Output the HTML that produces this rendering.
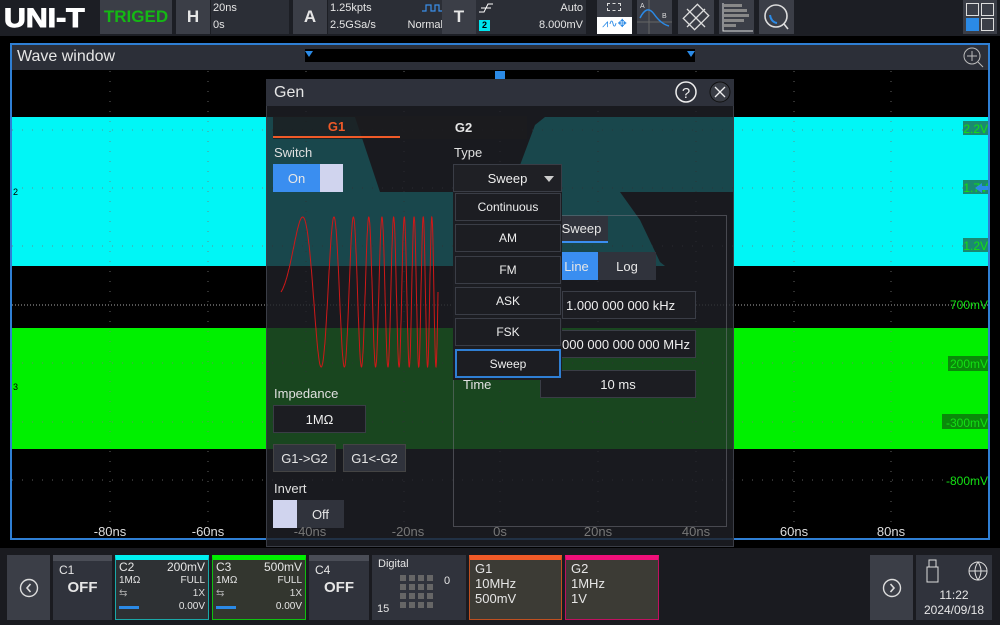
<!DOCTYPE html>
<html><head><meta charset="utf-8"><style>
*{margin:0;padding:0;box-sizing:border-box}
body{width:1000px;height:625px;background:#000;position:relative;overflow:hidden;font-family:"Liberation Sans","DejaVu Sans",sans-serif;color:#e6e6e6}
.a{position:absolute}
.c{display:flex;align-items:center;justify-content:center}
.tb{background:#2b2e36}
.btn{background:#3b3e47}
.f{background:#1c1d22;border:1px solid #3a3d46;font-size:13px;color:#eee}
.lbl{font-size:13px;color:#e0e0e0}
.card{background:#30333c;border-top:6px solid #4a4d56;font-size:12px}
</style></head><body>
<div class="a" style="left:0;top:0;width:1000px;height:36px;background:#1c1e24"></div>
<div class="a" style="left:4px;top:3px;font:900 27px 'Liberation Sans',sans-serif;color:#fff;line-height:30px;transform:scaleX(1.12);transform-origin:left;-webkit-text-stroke:1px #fff">UNI-T</div>
<div class="a c btn" style="left:100px;top:0;width:72px;height:34px;color:#14b814;font-weight:bold;font-size:17px">TRIGED</div>
<div class="a c btn" style="left:176px;top:0;width:34px;height:34px;font-size:17px;font-weight:bold">H</div>
<div class="a tb" style="left:211px;top:0;width:78px;height:34px;font-size:11px;line-height:17px;padding-left:2px">20ns<br>0s</div>
<div class="a c btn" style="left:293px;top:0;width:34px;height:34px;font-size:17px;font-weight:bold">A</div>
<div class="a tb" style="left:328px;top:0;width:118px;height:34px;font-size:11px;line-height:17px;padding-left:2px">1.25kpts<br>2.5GSa/s<span style="position:absolute;right:3px;top:17px">Normal</span>
<svg class="a" style="right:4px;top:3px" width="20" height="10"><path d="M0 8H4V2H9V8H13V2H17V8H20" stroke="#3a8ee8" fill="none" stroke-width="1.2"/></svg></div>
<div class="a c btn" style="left:442px;top:0;width:34px;height:34px;font-size:17px;font-weight:bold">T</div>
<div class="a tb" style="left:476px;top:0;width:110px;height:34px;font-size:11px;line-height:17px">
<svg class="a" style="left:3px;top:3px" width="14" height="10"><path d="M0 9H5L9 1H14M2 5H12" stroke="#fff" fill="none" stroke-width="1"/></svg>
<div class="a c" style="left:3px;top:20px;width:11px;height:11px;background:#00e5ee;color:#000;font-size:9px;font-weight:bold">2</div>
<span style="position:absolute;right:3px;top:0">Auto</span><span style="position:absolute;right:3px;top:17px">8.000mV</span></div>
<div class="a" style="left:597px;top:0;width:35px;height:17px;background:#3b3e47"><div class="a" style="left:10px;top:3px;width:14px;height:8px;border:1px dashed #ddd"></div></div>
<div class="a" style="left:597px;top:17px;width:35px;height:17px;background:#fff;color:#2b8ae6;font-size:11px;text-align:center">⩘∿✥</div>
<div class="a btn" style="left:637px;top:0;width:35px;height:34px"><svg width="35" height="34"><path d="M12 0V34M0 22H35" stroke="#666"/><path d="M3 18Q10 4 17 14T32 26" stroke="#2b8ae6" fill="none" stroke-width="1.5"/><text x="3" y="8" font-size="7" fill="#ddd">A</text><text x="25" y="18" font-size="7" fill="#ddd">B</text></svg></div>
<div class="a btn" style="left:678px;top:0;width:36px;height:34px"><svg width="36" height="34"><g stroke="#ddd" fill="none" stroke-width="1.3"><rect x="10" y="7" width="16" height="20" transform="rotate(45 18 17)"/><path d="M9 9L27 27M27 9L9 27"/></g></svg></div>
<div class="a btn" style="left:719px;top:0;width:35px;height:34px"><svg width="35" height="34"><path d="M4 3V31H34" stroke="#ddd" fill="none"/><g fill="#888"><rect x="5" y="4" width="18" height="3"/><rect x="5" y="9" width="23" height="3"/><rect x="5" y="14" width="25" height="3"/><rect x="5" y="19" width="20" height="3"/><rect x="5" y="24" width="12" height="3"/></g></svg></div>
<div class="a btn" style="left:759px;top:0;width:35px;height:34px"><svg width="35" height="34"><circle cx="17" cy="16" r="11" stroke="#ddd" fill="none" stroke-width="1.6"/><path d="M25 24L29 29" stroke="#ddd" stroke-width="1.6"/><path d="M11 15Q12 22 18 23" stroke="#2b8ae6" fill="none" stroke-width="2"/></svg></div>
<div class="a btn" style="left:963px;top:0;width:34px;height:34px"><div class="a" style="left:3px;top:3px;width:13px;height:13px;border:1px solid #ddd"></div><div class="a" style="left:18px;top:3px;width:13px;height:13px;border:1px solid #ddd"></div><div class="a" style="left:3px;top:18px;width:13px;height:13px;background:#2b8ae6"></div><div class="a" style="left:18px;top:18px;width:13px;height:13px;border:1px solid #ddd"></div></div>

<div class="a" style="left:10px;top:43px;width:980px;height:497px;border:2px solid #2f7fd4"></div>
<div class="a" style="left:12px;top:45px;width:976px;height:25px;background:#2c2f38;font-size:16px;line-height:24px;padding-left:5px">Wave window</div>
<div class="a" style="left:305px;top:49px;width:390px;height:13px;background:#000"></div>
<svg class="a" style="left:305px;top:51px" width="390" height="8"><path d="M0 0H8L4 6Z M382 0H390L386 6Z" fill="#2b8ae6"/></svg>
<svg class="a" style="left:962px;top:46px" width="22" height="22"><circle cx="10" cy="10" r="8" stroke="#bbb" fill="none"/><path d="M10 5V15M5 10H15M16 16L21 21" stroke="#bbb"/></svg>
<svg class="a" style="left:0;top:0" width="1000" height="625">
<path d="M12 117H355L380 192H510L535 125L545 117H988V266H734V192H620L640 220L660 262L665 266H12Z" fill="#00f6f6"/>
<rect x="12" y="328" width="976" height="121" fill="#00f000"/>
<g stroke="#777" stroke-dasharray="1 9" stroke-width="1" opacity=".8">
<path d="M110 71V538M208 71V538M306 71V538M404 71V538M500 71V538M598 71V538M696 71V538M794 71V538M891 71V538"/>
<path d="M12 130H988M12 188H988M12 246H988M12 363H988M12 422H988M12 480H988"/>
</g>
<path d="M12 305H988" stroke="#aaa" stroke-dasharray="1 2"/>
<rect x="495" y="71" width="10" height="8" fill="#2b8ae6"/>
<path d="M12 185H20L23 192L20 199H12Z" fill="#00f6f6"/><text x="13" y="195" font-size="9" fill="#000">2</text>
<path d="M12 379H20L23 386L20 393H12Z" fill="#00f000"/><text x="13" y="390" font-size="9" fill="#000">3</text>
<g font-size="12" fill="#13e013" text-anchor="end" font-family="Liberation Sans">
<rect x="963" y="121" width="25" height="14" fill="#1a8a70"/><text x="988" y="133">2.2V</text>
<rect x="963" y="180" width="25" height="14" fill="#1a8a70"/><text x="988" y="192">1.7V</text>
<rect x="963" y="238" width="25" height="14" fill="#1a8a70"/><text x="988" y="250">1.2V</text>
<text x="988" y="309">700mV</text>
<rect x="948" y="356" width="40" height="15" fill="#0a8a0a"/><text x="988" y="368">200mV</text>
<rect x="942" y="414" width="46" height="15" fill="#0a8a0a"/><text x="988" y="427">-300mV</text>
<text x="988" y="485">-800mV</text></g>
<path d="M975 188L982 183V186H988V190H982V193Z" fill="#2b8ae6"/>
<g font-size="13" fill="#ddd" text-anchor="middle" font-family="Liberation Sans">
<text x="110" y="536">-80ns</text><text x="208" y="536">-60ns</text><text x="794" y="536">60ns</text><text x="891" y="536">80ns</text></g>
</svg>

<div class="a" style="left:266px;top:79px;width:468px;height:468px;background:rgba(30,32,38,.82);border:1px solid #3a3d46"></div>
<div class="a" style="left:266px;top:79px;width:468px;height:27px;background:#2e313b;font-size:16px;line-height:27px;padding-left:8px">Gen</div>
<svg class="a" style="left:672px;top:80px" width="60" height="26"><circle cx="14" cy="12" r="10" stroke="#eee" fill="none" stroke-width="1.5"/><text x="14" y="18" font-size="15" fill="#eee" text-anchor="middle">?</text><circle cx="48" cy="12" r="10" fill="#3a3d45" stroke="#111"/><path d="M43 7L53 17M53 7L43 17" stroke="#eee" stroke-width="1.3"/></svg>
<div class="a" style="left:273px;top:116px;width:254px;height:23px;background:rgba(28,28,30,.8)"></div>
<div class="a c" style="left:273px;top:116px;width:127px;height:22px;color:#f05a28;font-size:13px;font-weight:bold;border-bottom:2px solid #f05a28">G1</div>
<div class="a c" style="left:400px;top:116px;width:127px;height:22px;font-size:13px;font-weight:bold">G2</div>
<div class="a lbl" style="left:274px;top:145px">Switch</div>
<div class="a c" style="left:273px;top:164px;width:47px;height:28px;background:#3a8ef0;font-size:13px">On</div>
<div class="a" style="left:320px;top:164px;width:23px;height:28px;background:#d0d4ee"></div>
<svg class="a" style="left:278px;top:212px" width="165" height="165" id="ch"></svg>
<div class="a lbl" style="left:274px;top:386px">Impedance</div>
<div class="a c f" style="left:273px;top:405px;width:93px;height:28px">1MΩ</div>
<div class="a c" style="left:273px;top:444px;width:63px;height:28px;background:#30333c;border:1px solid #444;font-size:13px">G1-&gt;G2</div>
<div class="a c" style="left:343px;top:444px;width:63px;height:28px;background:#30333c;border:1px solid #444;font-size:13px">G1&lt;-G2</div>
<div class="a lbl" style="left:274px;top:481px">Invert</div>
<div class="a" style="left:273px;top:500px;width:24px;height:28px;background:#d0d4ee"></div>
<div class="a c" style="left:297px;top:500px;width:47px;height:28px;background:#30333c;font-size:13px">Off</div>
<div class="a" style="left:453px;top:215px;width:274px;height:312px;border:1px solid rgba(120,120,130,.5)"></div>
<div class="a lbl" style="left:454px;top:145px">Type</div>
<div class="a c" style="left:555px;top:216px;width:53px;height:27px;background:#30333c;border-bottom:2px solid #3a8ef0;font-size:13px">Sweep</div>
<div class="a c" style="left:555px;top:252px;width:43px;height:28px;background:#3a8ef0;font-size:13px">Line</div>
<div class="a c" style="left:598px;top:252px;width:58px;height:28px;background:#30333c;font-size:13px">Log</div>
<div class="a c f" style="left:562px;top:291px;width:134px;height:28px;justify-content:flex-start;padding-left:3px">1.000 000 000 kHz</div>
<div class="a c f" style="left:540px;top:330px;width:156px;height:28px;justify-content:flex-end;padding-right:5px">1.000 000 000 000 MHz</div>
<div class="a lbl" style="left:463px;top:377px">Time</div>
<div class="a c f" style="left:540px;top:370px;width:156px;height:28px">10 ms</div>
<div class="a c f" style="left:453px;top:164px;width:109px;height:28px;background:#1f2025;font-size:13px">Sweep<svg style="position:absolute;right:7px;top:11px" width="10" height="6"><path d="M0 0H10L5 6Z" fill="#ccc"/></svg></div>
<div class="a" style="left:453px;top:192px;width:109px;height:188px;background:#1c1d22"></div>
<div class="a c f" style="left:455px;top:193px;width:106px;height:28px;font-size:12px">Continuous</div>
<div class="a c f" style="left:455px;top:224px;width:106px;height:28px;font-size:12px">AM</div>
<div class="a c f" style="left:455px;top:256px;width:106px;height:28px;font-size:12px">FM</div>
<div class="a c f" style="left:455px;top:287px;width:106px;height:28px;font-size:12px">ASK</div>
<div class="a c f" style="left:455px;top:318px;width:106px;height:28px;font-size:12px">FSK</div>
<div class="a c f" style="left:455px;top:349px;width:106px;height:29px;font-size:12px;border:2px solid #2f7fd4">Sweep</div>
<svg class="a" style="left:266px;top:520px" width="468" height="20"><g font-size="13" fill="#777" text-anchor="middle" font-family="Liberation Sans"><text x="44" y="16">-40ns</text><text x="142" y="16">-20ns</text><text x="234" y="16">0s</text><text x="332" y="16">20ns</text><text x="430" y="16">40ns</text></g></svg>

<div class="a" style="left:0;top:548px;width:1000px;height:77px;background:#1a1b20"></div>
<div class="a c" style="left:7px;top:555px;width:43px;height:65px;background:#3b3e47"><svg width="20" height="20"><circle cx="10" cy="10" r="8.5" stroke="#ddd" fill="none" stroke-width="1.4"/><path d="M11.5 6L8 10L11.5 14" stroke="#ddd" fill="none" stroke-width="1.6"/></svg></div>
<div class="a card" style="left:53px;top:555px;width:59px;height:65px;padding:2px 6px"><div style="font-size:12px">C1</div><div style="text-align:center;font-weight:bold;font-size:15px;margin-top:2px">OFF</div></div>
<div class="a card" style="left:115px;top:555px;width:94px;height:65px;border:1px solid #1aa8a8;border-top:5px solid #00f0f0;background:#2e3134;padding:1px 3px;font-size:11px;line-height:13px"><div style="font-size:12px">C2<span style="float:right">200mV</span></div><div style="font-size:10px">1MΩ<span style="float:right">FULL</span></div><div style="font-size:10px;color:#aaa">⇆<span style="float:right;color:#ddd">1X</span></div><div style="font-size:10px"><span style="color:#2b8ae6">▬▬</span><span style="float:right">0.00V</span></div></div>
<div class="a card" style="left:212px;top:555px;width:94px;height:65px;border:1px solid #10c010;border-top:5px solid #00f000;background:#33362f;padding:1px 3px;font-size:11px;line-height:13px"><div style="font-size:12px">C3<span style="float:right">500mV</span></div><div style="font-size:10px">1MΩ<span style="float:right">FULL</span></div><div style="font-size:10px;color:#aaa">⇆<span style="float:right;color:#ddd">1X</span></div><div style="font-size:10px"><span style="color:#2b8ae6">▬▬</span><span style="float:right">0.00V</span></div></div>
<div class="a card" style="left:309px;top:555px;width:60px;height:65px;padding:2px 6px"><div>C4</div><div style="text-align:center;font-weight:bold;font-size:15px;margin-top:2px">OFF</div></div>
<div class="a" style="left:372px;top:555px;width:94px;height:65px;background:#30333c;font-size:11px;padding:3px 6px">Digital<span style="position:absolute;left:72px;top:20px">0</span><span style="position:absolute;left:5px;top:48px">15</span>
<svg class="a" style="left:28px;top:20px" width="40" height="40"><g fill="#666"><rect x="0" y="0" width="6" height="6"/><rect x="9" y="0" width="6" height="6"/><rect x="18" y="0" width="6" height="6"/><rect x="27" y="0" width="6" height="6"/><rect x="0" y="9" width="6" height="6"/><rect x="9" y="9" width="6" height="6"/><rect x="18" y="9" width="6" height="6"/><rect x="27" y="9" width="6" height="6"/><rect x="0" y="18" width="6" height="6"/><rect x="9" y="18" width="6" height="6"/><rect x="18" y="18" width="6" height="6"/><rect x="27" y="18" width="6" height="6"/><rect x="0" y="27" width="6" height="6"/><rect x="9" y="27" width="6" height="6"/><rect x="18" y="27" width="6" height="6"/><rect x="27" y="27" width="6" height="6"/></g></svg></div>
<div class="a" style="left:469px;top:555px;width:93px;height:65px;background:#3c3b35;border:1px solid #c05020;border-top:5px solid #f05a28;font-size:13px;line-height:15px;padding:1px 5px">G1<br>10MHz<br>500mV</div>
<div class="a" style="left:565px;top:555px;width:94px;height:65px;background:#3c3b35;border:1px solid #c01060;border-top:5px solid #f0107a;font-size:13px;line-height:15px;padding:1px 5px">G2<br>1MHz<br>1V</div>
<div class="a c" style="left:870px;top:555px;width:43px;height:65px;background:#3b3e47"><svg width="20" height="20"><circle cx="10" cy="10" r="8.5" stroke="#ddd" fill="none" stroke-width="1.4"/><path d="M8.5 6L12 10L8.5 14" stroke="#ddd" fill="none" stroke-width="1.6"/></svg></div>
<div class="a" style="left:916px;top:555px;width:76px;height:65px;background:#30333c;font-size:12px;text-align:center">
<svg class="a" style="left:8px;top:3px" width="64" height="26"><rect x="3" y="9" width="11" height="15" stroke="#ddd" fill="none"/><rect x="5" y="2" width="7" height="7" stroke="#ddd" fill="none"/><circle cx="54" cy="13" r="9" stroke="#ddd" fill="none"/><path d="M45 13H63M54 4Q48 13 54 22Q60 13 54 4" stroke="#ddd" fill="none"/></svg>
<div class="a" style="left:0;top:33px;width:76px;line-height:15px">11:22<br>2024/09/18</div></div>
<script>
var s='',x0=3,x1=160;for(var i=0;i<=1500;i++){var t=i/1500;var ph=2*Math.PI*(0.5*t+9.5*t*t);var x=x0+t*(x1-x0);var y=80-75*Math.sin(ph);s+=(i?'L':'M')+x.toFixed(1)+' '+y.toFixed(1);}
document.getElementById('ch').innerHTML='<path d="'+s+'" stroke="#d01818" fill="none" stroke-width="1"/>';
</script>
</body></html>
